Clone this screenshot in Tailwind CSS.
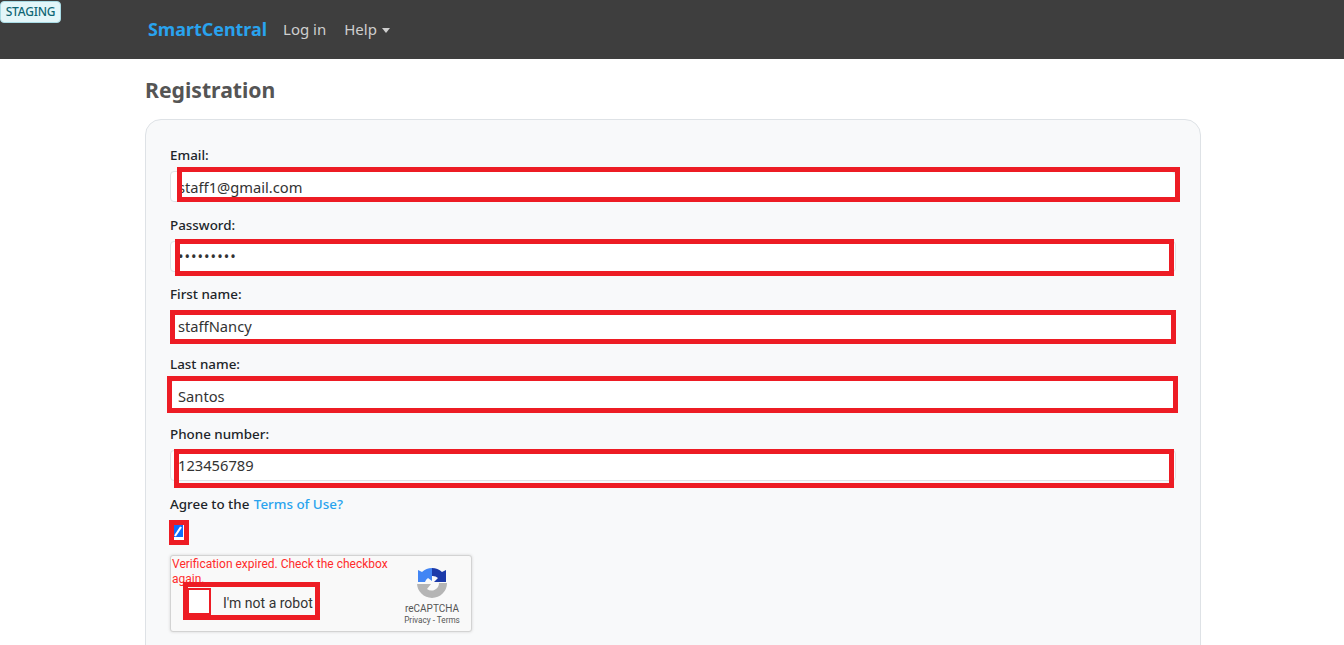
<!DOCTYPE html>
<html lang="en">
<head>
    <meta charset="UTF-8">
    <meta name="viewport" content="width=device-width, initial-scale=1.0">
    <title>SmartCentral - Registration</title>
    <script src="https://cdn.jsdelivr.net/npm/@tailwindcss/browser@4"></script>
</head>
<body class="relative h-[645px] overflow-hidden bg-white font-['Noto_Sans',sans-serif] text-[#212529]">
    <!-- Staging badge -->
    <div class="absolute left-0 top-[1px] flex h-[22px] w-[61px] items-center justify-center rounded-[4px] border border-[#a8dbe5] bg-[#e3f6f9] text-[12px] font-medium tracking-[-0.2px] text-[#0f6674]">STAGING</div>

    <!-- Navbar -->
    <nav class="flex h-[59px] items-center bg-[#3e3e3e] pl-[148px]">
        <a class="text-[17.9px] font-bold text-[#29a3ee]">SmartCentral</a>
        <a class="ml-4 text-[15px] text-[#cfcfcf]">Log in</a>
        <a class="ml-[18px] flex items-center text-[15px] text-[#cfcfcf]">Help<span class="ml-[5px] mt-[2px] border-x-[4px] border-t-[5px] border-x-transparent border-t-[#cfcfcf]"></span></a>
    </nav>

    <main class="ml-[145px] w-[1056px]">
        <h1 class="mt-[16px] h-[44px] text-[21.2px] font-bold leading-[30px] text-[#555555]">Registration</h1>

        <!-- Form card -->
        <form class="h-[700px] rounded-[16px] border border-[#dee2e6] bg-[#f8f9fa] px-[24px] pt-[25px]">
            <label class="block text-[13.4px] font-medium leading-[21px]">Email:</label>
            <input type="text" value="staff1@gmail.com" class="mt-[5px] mb-[12.7px] block h-[31px] w-[1006px] rounded-[4px] border border-[#dee2e6] bg-white px-[7px] text-[14.7px] text-[#333333]">

            <label class="block text-[13.4px] font-medium leading-[21px]">Password:</label>
            <input type="password" value="password1" class="mt-[5px] mb-[12.7px] block h-[31px] w-[1006px] rounded-[4px] border border-[#dee2e6] bg-white px-[7px] text-[14.7px] tracking-[1px] text-[#333333]">

            <label class="block text-[13.4px] font-medium leading-[21px]">First name:</label>
            <input type="text" value="staffNancy" class="mt-[5px] mb-[12.7px] block h-[31px] w-[1006px] rounded-[4px] border border-[#dee2e6] bg-white px-[7px] text-[14.7px] text-[#333333]">

            <label class="block text-[13.4px] font-medium leading-[21px]">Last name:</label>
            <input type="text" value="Santos" class="mt-[5px] mb-[12.7px] block h-[31px] w-[1006px] rounded-[4px] border border-[#dee2e6] bg-white px-[7px] text-[14.7px] text-[#333333]">

            <label class="block text-[13.4px] font-medium leading-[21px]">Phone number:</label>
            <input type="text" value="123456789" class="mt-[5px] mb-[13px] block h-[31px] w-[1006px] rounded-[4px] border border-[#dee2e6] bg-white px-[7px] text-[14.7px] text-[#333333]">

            <label class="block text-[13.4px] font-medium leading-[21px]">Agree to the <a class="ml-[1px] text-[#29a3ee]">Terms of Use?</a></label>
            <div class="ml-[4px] mt-[10.6px] h-[15px] w-[10px] bg-white">
                <div class="h-[12px] w-[9px] bg-[#0d6efd]">
                    <svg viewBox="0 0 9 12" class="h-[12px] w-[9px]"><path d="M1 11 L7 2" fill="none" stroke="#fff" stroke-width="2.2"/></svg>
                </div>
            </div>

            <!-- reCAPTCHA widget -->
            <div class="relative mt-[15px] h-[77px] w-[302px] rounded-[3px] border border-[#d3d3d3] bg-[#f9f9f9] font-['Roboto',sans-serif] shadow-[0_0_3px_#d3d3d3]">
                <p class="ml-[1px] mt-[1px] w-[225px] text-[12px] leading-[15px] text-[#ff2b2b]">Verification expired. Check the checkbox again.</p>
                <span class="absolute left-[52px] top-[38px] text-[14px] leading-[18px] text-[#333333]">I'm not a robot</span>
                <div class="absolute left-[232px] top-[11px] flex w-[58px] flex-col items-center text-[#555555]">
                    <svg viewBox="0 0 32 32" class="h-[32px] w-[32px]">
                        <path d="M16 1 A15 15 0 0 1 26 5 L30 3 V15 H18 L22 11 A8 8 0 0 0 16 9 Z" fill="#1c3aa9"/>
                        <path d="M16 1 A15 15 0 0 0 6 5 L2 3 V15 H9 A7 7 0 0 1 12 11 L16 14 V1 Z" fill="#4285f4"/>
                        <path d="M1 16 A15 15 0 0 0 31 16 H23 A7.5 7.5 0 0 1 11 22 L15 17 H1 Z" fill="#b5b5b5"/>
                    </svg>
                    <span class="mt-[4px] text-[10px] leading-[12px]">reCAPTCHA</span>
                    <span class="whitespace-nowrap text-[8.2px] leading-[10px]">Privacy - Terms</span>
                </div>
            </div>
        </form>
    </main>

    <!-- Red annotation boxes drawn over the screenshot -->
    <div class="absolute left-[177px] top-[167px] h-[35px] w-[1003px] border-[5px] border-[#ed1c24]"></div>
    <div class="absolute left-[175px] top-[239px] h-[37px] w-[999px] border-[5px] border-[#ed1c24]"></div>
    <div class="absolute left-[170px] top-[310px] h-[34px] w-[1006px] border-[5px] border-[#ed1c24]"></div>
    <div class="absolute left-[167px] top-[376px] h-[37px] w-[1011px] border-[5px] border-[#ed1c24]"></div>
    <div class="absolute left-[174px] top-[449px] h-[39px] w-[1000px] border-[5px] border-[#ed1c24]"></div>
    <div class="absolute left-[169px] top-[520px] h-[25px] w-[20px] border-[5px] border-[#ed1c24]"></div>
    <div class="absolute left-[183px] top-[582px] h-[38px] w-[137px] border-[5px] border-[#ed1c24]"></div>
    <div class="absolute left-[187px] top-[588px] h-[27px] w-[24px] border-2 border-[#ed1c24] bg-white"></div>
</body>
</html>
